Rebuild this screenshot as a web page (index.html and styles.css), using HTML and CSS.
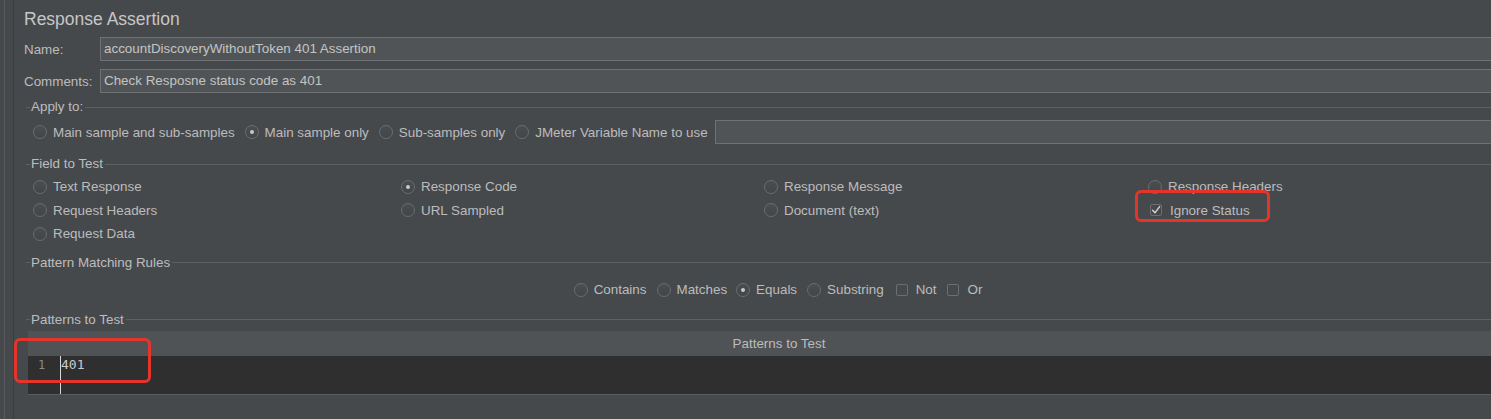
FILE: index.html
```html
<!DOCTYPE html>
<html>
<head>
<meta charset="utf-8">
<title>Response Assertion</title>
<link rel="stylesheet" href="styles.css">
</head>
<body>
<div class="app">
  <div class="gutter"></div>
  <div class="panel">
    <div class="title">Response Assertion</div>
    <div class="field-row">
      <span class="field-label">Name:</span>
      <div class="text-input">accountDiscoveryWithoutToken 401 Assertion</div>
    </div>
    <div class="field-row second">
      <span class="field-label">Comments:</span>
      <div class="text-input">Check Resposne status code as 401</div>
    </div>

    <section class="group group-apply">
      <div class="legend"><span>Apply to:</span></div>
      <div class="opt-row">
        <span class="opt"><span class="radio"></span>Main sample and sub-samples</span>
        <span class="opt"><span class="radio on"></span>Main sample only</span>
        <span class="opt"><span class="radio"></span>Sub-samples only</span>
        <span class="opt opt-last"><span class="radio"></span>JMeter Variable Name to use</span>
        <div class="text-input var-input"></div>
      </div>
    </section>

    <section class="group group-field">
      <div class="legend"><span>Field to Test</span></div>
      <div class="field-grid">
        <span class="opt"><span class="radio"></span>Text Response</span>
        <span class="opt"><span class="radio on"></span>Response Code</span>
        <span class="opt"><span class="radio"></span>Response Message</span>
        <span class="opt"><span class="radio"></span>Response Headers</span>
        <span class="opt"><span class="radio"></span>Request Headers</span>
        <span class="opt"><span class="radio"></span>URL Sampled</span>
        <span class="opt"><span class="radio"></span>Document (text)</span>
        <span class="opt opt-check marked">
          <span class="check on"><svg viewBox="0 0 12 12" width="12" height="12"><path d="M2.6 6.2 L5 8.8 L9.6 2.6" fill="none" stroke="#d6d6d6" stroke-width="1.4" stroke-linecap="round" stroke-linejoin="round"/></svg></span>Ignore Status
          <span class="highlight hl-status"></span>
        </span>
        <span class="opt"><span class="radio"></span>Request Data</span>
      </div>
    </section>

    <section class="group group-rules">
      <div class="legend"><span>Pattern Matching Rules</span></div>
      <div class="rules-row">
        <span class="opt r1"><span class="radio"></span>Contains</span>
        <span class="opt r2"><span class="radio"></span>Matches</span>
        <span class="opt r3"><span class="radio on"></span>Equals</span>
        <span class="opt r4"><span class="radio"></span>Substring</span>
        <span class="opt opt-check r5"><span class="check"></span>Not</span>
        <span class="opt opt-check"><span class="check"></span>Or</span>
      </div>
    </section>

    <section class="group group-patterns">
      <div class="legend"><span>Patterns to Test</span></div>
      <div class="table">
        <div class="table-head">Patterns to Test</div>
        <div class="editor">
          <div class="line-nums">1</div>
          <div class="code">401</div>
        </div>
        <span class="highlight hl-editor"></span>
      </div>
    </section>
  </div>
</div>
</body>
</html>
```

FILE: styles.css
```css
html, body {
  margin: 0;
  padding: 0;
  background: #46494c;
  overflow: hidden;
  height: 100%;
}

body {
  font-family: "Liberation Sans", Arial, Helvetica, sans-serif;
  font-size: 13.4px;
  color: #bcbcbc;
}

.app {
  display: flex;
  width: 1530px;
  height: 419px;
}

.gutter {
  width: 13px;
  flex: none;
  border-right: 1px solid #3b3e41;
  background: linear-gradient(to right, transparent 4px, #57595c 4px, #57595c 5px, transparent 5px);
}

.panel {
  flex: 1;
  padding-left: 10px;
  display: flex;
  flex-direction: column;
}

.title {
  margin-top: 8px;
  height: 22px;
  line-height: 22px;
  font-size: 17.5px;
  color: #c6c6c6;
}

.field-row {
  display: flex;
  align-items: center;
  height: 24px;
  margin-top: 7px;
}

.field-row.second {
  margin-top: 8px;
}

.field-label {
  width: 76px;
  flex: none;
}

.text-input {
  flex: 1;
  height: 24px;
  box-sizing: border-box;
  background: #515456;
  border: 1px solid #6f7274;
  padding-left: 3px;
  line-height: 22px;
  color: #c4c4c4;
  white-space: nowrap;
}

.group {
  margin-left: 2px;
  display: flex;
  flex-direction: column;
}

.legend {
  display: flex;
  align-items: center;
  height: 14px;
  line-height: 14px;
}

.legend::before {
  content: "";
  width: 4px;
  height: 1px;
  background: #5e6164;
}

.legend span {
  padding: 0 2px 0 1px;
  color: #bdbdbd;
}

.legend::after {
  content: "";
  flex: 1;
  height: 1px;
  background: #5e6164;
}

.group-apply { margin-top: 7px; }
.group-field { margin-top: 13px; }
.group-rules { margin-top: 10px; }
.group-patterns { margin-top: 11px; }

.opt-row {
  display: flex;
  align-items: center;
  height: 24px;
  margin-top: 6px;
  padding-left: 7px;
}

.opt {
  display: inline-flex;
  align-items: center;
  white-space: nowrap;
  margin-right: 10px;
  position: relative;
}

.opt-row .opt-last {
  margin-right: 7px;
}

.radio {
  width: 14px;
  height: 14px;
  box-sizing: border-box;
  border-radius: 50%;
  border: 1px solid #6a6d70;
  background: linear-gradient(#4b4e51, #434649);
  margin-right: 6px;
  flex: none;
  display: inline-flex;
  align-items: center;
  justify-content: center;
}

.radio.on::after {
  content: "";
  width: 4px;
  height: 4px;
  border-radius: 50%;
  background: #c8c8c8;
}

.check {
  width: 12px;
  height: 12px;
  box-sizing: border-box;
  border: 1px solid #6c6f72;
  border-radius: 2px;
  background: #46494c;
  margin-right: 8px;
  flex: none;
  display: inline-flex;
  align-items: center;
  justify-content: center;
}

.check svg {
  display: block;
  flex: none;
}

.field-grid {
  display: grid;
  grid-template-columns: 368px 363px 384px 1fr;
  grid-auto-rows: 23.5px;
  align-items: center;
  margin-top: 4px;
  padding-left: 7px;
}

.field-grid .opt-check {
  margin-left: 2px;
}

.rules-row {
  display: flex;
  align-items: center;
  justify-content: center;
  height: 24px;
  margin-top: 8px;
}

.rules-row .r2 { margin-right: 9px; }
.rules-row .r4 { margin-right: 12px; }
.rules-row .r5 { margin-right: 11px; }
.rules-row .opt:last-child { margin-right: 0; }

.table {
  margin-top: 4px;
  margin-left: 2px;
  position: relative;
}

.table-head {
  height: 25px;
  line-height: 25px;
  background: #505356;
  text-align: center;
  color: #bcbcbc;
}

.editor {
  display: flex;
  height: 38px;
  background: #2f2f2f;
  border-bottom: 1px solid #5a5d60;
}

.line-nums {
  width: 32px;
  flex: none;
  box-sizing: border-box;
  padding-left: 10px;
  padding-top: 1px;
  font-family: "DejaVu Sans Mono", "Liberation Mono", monospace;
  font-size: 12px;
  line-height: 16px;
  color: #8a8a8a;
}

.code {
  flex: 1;
  border-left: 1px solid #d8d8d8;
  padding-top: 0;
  font-family: "DejaVu Sans Mono", "Liberation Mono", monospace;
  font-size: 13px;
  line-height: 17px;
  color: #cacaca;
}

.highlight {
  position: absolute;
  box-sizing: border-box;
  border: 3px solid #e5352b;
  border-radius: 6px;
  pointer-events: none;
}

.hl-status {
  left: -15px;
  top: -13px;
  width: 135px;
  height: 32px;
}

.hl-editor {
  left: -14px;
  top: 7px;
  width: 137px;
  height: 45px;
}
```
